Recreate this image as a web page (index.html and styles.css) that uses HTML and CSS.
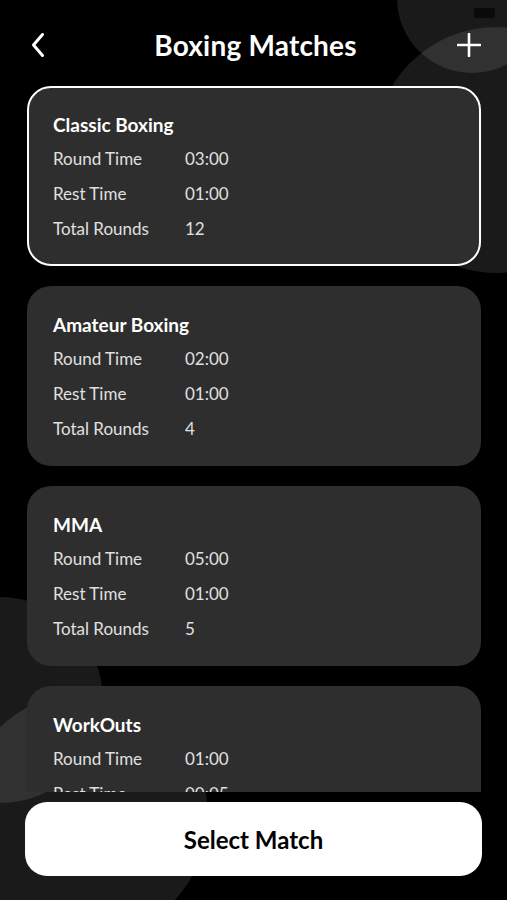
FILE: index.html
```html
<!DOCTYPE html>
<html>
<head>
<meta charset="utf-8">
<link rel="stylesheet" href="styles.css">
</head>
<body>
<div class="screen">
  <div class="deco deco-a"></div>
  <div class="deco deco-b"></div>
  <div class="deco deco-d"></div>
  <div class="deco deco-e"></div>
  <div class="status-pill"></div>

  <div class="app">
    <header class="header">
      <button class="icon-btn back" aria-label="Back">
        <svg width="16" height="28" viewBox="0 0 16 28"><path d="M12.5 3.5 L3.5 14 L12.5 24.5" fill="none" stroke="#fff" stroke-width="3" stroke-linecap="round" stroke-linejoin="round"/></svg>
      </button>
      <h1 class="title">Boxing Matches</h1>
      <button class="icon-btn add" aria-label="Add">
        <svg width="24" height="24" viewBox="0 0 24 24"><path d="M12 1 V23 M1 12 H23" fill="none" stroke="#fff" stroke-width="2.6" stroke-linecap="round"/></svg>
      </button>
    </header>

    <main class="list">
      <section class="card selected">
        <h2 class="card-title">Classic Boxing</h2>
        <div class="row"><span class="label">Round Time</span><span class="value">03:00</span></div>
        <div class="row"><span class="label">Rest Time</span><span class="value">01:00</span></div>
        <div class="row"><span class="label">Total Rounds</span><span class="value">12</span></div>
      </section>
      <section class="card">
        <h2 class="card-title">Amateur Boxing</h2>
        <div class="row"><span class="label">Round Time</span><span class="value">02:00</span></div>
        <div class="row"><span class="label">Rest Time</span><span class="value">01:00</span></div>
        <div class="row"><span class="label">Total Rounds</span><span class="value">4</span></div>
      </section>
      <section class="card">
        <h2 class="card-title">MMA</h2>
        <div class="row"><span class="label">Round Time</span><span class="value">05:00</span></div>
        <div class="row"><span class="label">Rest Time</span><span class="value">01:00</span></div>
        <div class="row"><span class="label">Total Rounds</span><span class="value">5</span></div>
      </section>
      <section class="card">
        <h2 class="card-title">WorkOuts</h2>
        <div class="row"><span class="label">Round Time</span><span class="value">01:00</span></div>
        <div class="row"><span class="label">Rest Time</span><span class="value">00:05</span></div>
      </section>
    </main>

    <div class="footer">
      <button class="select-btn">Select Match</button>
    </div>
  </div>
</div>
</body>
</html>
```

FILE: styles.css
```css
* { box-sizing: border-box; }

html, body {
  margin: 0;
  padding: 0;
  background: #000;
}

body {
  font-family: "Lato", "Open Sans", sans-serif;
  color: #fff;
}

.screen {
  position: relative;
  width: 507px;
  height: 900px;
  overflow: hidden;
  background: #000;
}

.deco {
  position: absolute;
  border-radius: 50%;
  background: rgba(255, 255, 255, 0.1);
  z-index: 0;
}
.deco-a { left: 397px; top: -77px; width: 150px; height: 150px; }
.deco-b { left: 374px; top: 27px; width: 246px; height: 246px; }
.deco-d { left: -103px; top: 597px; width: 206px; height: 206px; }
.deco-e { left: -38px; top: 693px; width: 246px; height: 246px; }

.status-pill {
  position: absolute;
  left: 474px;
  top: 8px;
  width: 21px;
  height: 10px;
  border-radius: 2px;
  background: #0a0a0a;
  z-index: 1;
}

.app {
  position: relative;
  z-index: 2;
  display: flex;
  flex-direction: column;
  height: 900px;
}

.header {
  display: grid;
  grid-template-columns: 1fr auto 1fr;
  align-items: center;
  height: 52px;
  margin-top: 19px;
  margin-bottom: 15px;
  padding: 0 26px 0 30px;
}

.icon-btn {
  background: none;
  border: 0;
  padding: 0;
  display: flex;
  align-items: center;
  cursor: pointer;
}
.back { justify-self: start; }
.add { justify-self: end; }

.title {
  margin: 0;
  font-size: 28px;
  font-weight: 700;
  letter-spacing: 0.2px;
  line-height: 52px;
}

.list {
  flex: 0 0 706px;
  overflow: hidden;
  display: flex;
  flex-direction: column;
  gap: 20px;
  padding: 0 26px 0 27px;
}

.card {
  flex: 0 0 180px;
  background: #2e2e2e;
  border: 2px solid transparent;
  border-radius: 24px;
  padding: 25px 24px 0 24px;
}
.card.selected {
  border-color: #fff;
}

.card-title {
  margin: 0 0 4px 0;
  font-size: 19px;
  font-weight: 700;
  line-height: 24px;
  color: #fff;
}

.row {
  display: flex;
  align-items: center;
  height: 35px;
  font-size: 17px;
  color: #e0e0e0;
}
.label { width: 132px; }

.footer {
  padding: 10px 25px 0 25px;
}

.select-btn {
  width: 100%;
  height: 74px;
  border: 0;
  border-radius: 22px;
  background: #fff;
  color: #000;
  font-family: "Lato", "Open Sans", sans-serif;
  font-size: 24px;
  font-weight: 700;
  cursor: pointer;
}
```
